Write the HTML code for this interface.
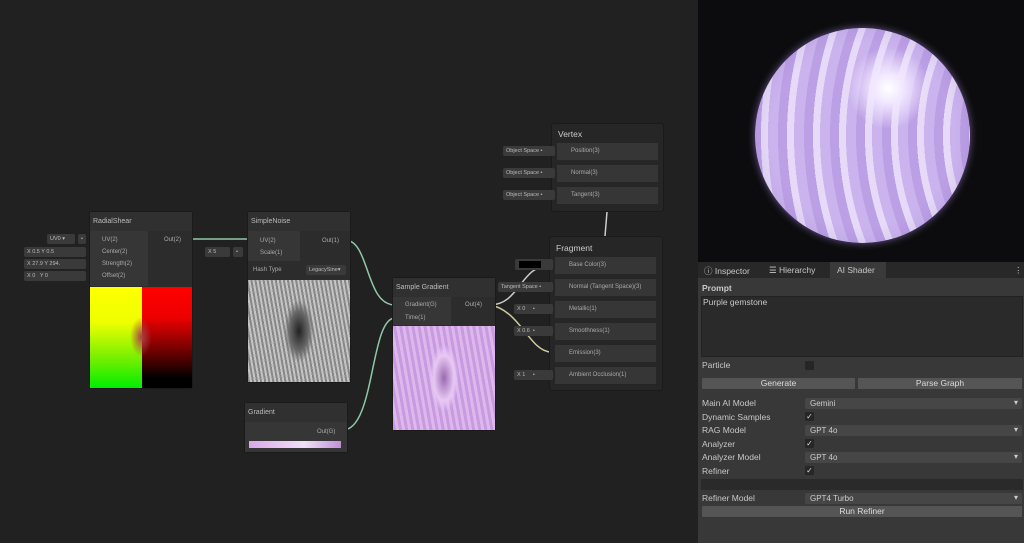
<!DOCTYPE html>
<html><head><style>
*{margin:0;padding:0;box-sizing:border-box}
body{width:1024px;height:543px;background:#212121;position:relative;overflow:hidden;font-family:"Liberation Sans",sans-serif;color:#c4c4c4}
.a{position:absolute}
.node{position:absolute;background:#2c2c2c;border:1px solid #1a1a1a;border-radius:3px}
.hd{position:absolute;left:0;right:0;top:0;height:19px;background:#303030;font-size:7px;color:#bbb;padding:6px 0 0 3px}
.t{font-size:6px;color:#aaa;position:absolute;white-space:nowrap}
.in{position:absolute;background:#3a3a3a;border-radius:2px;font-size:5.5px;color:#bbb;padding:2px 3px;white-space:nowrap}
.slot{position:absolute;background:#363636;height:17px;font-size:6px;color:#aaa;padding:5px 0 0 14px}
.pl{position:absolute;font-size:8.5px;color:#c8c8c8;white-space:nowrap}
.dd{position:absolute;background:#464646;height:11px;border-radius:2px;font-size:8px;color:#ccc;padding:1px 5px}
.dd:after{content:"▾";position:absolute;right:4px;top:0;font-size:8px}
.cb{position:absolute;width:9px;height:9px;background:#262626;border-radius:1px;font-size:8px;color:#ddd;line-height:9px;text-align:center}
.btn{position:absolute;background:#555;height:11px;font-size:8.5px;color:#ddd;text-align:center;line-height:11px;border-radius:1px}
</style></head><body>
<svg class="a" style="left:0;top:0" width="700" height="543">
<g fill="none" stroke-width="1.5">
<path d="M190 239 L250 239" stroke="#8fc9a8"/>
<path d="M345 240 C370 240,365 305,395 305" stroke="#8fc9a8"/>
<path d="M343 430 C375 430,370 318,395 318" stroke="#8fc9a8"/>
<path d="M490 305 C520 305,520 265,551 265" stroke="#ccc"/>
<path d="M490 305 C520 310,530 352,551 352" stroke="#cfc9a0"/>
<path d="M607 212 L605 236" stroke="#ccc"/>
</g>
<g fill="#8fc9a8"><circle cx="188" cy="239" r="2"/><circle cx="253" cy="239" r="2"/><circle cx="343" cy="240" r="2"/><circle cx="398" cy="304" r="2"/><circle cx="398" cy="317" r="2"/><circle cx="341" cy="430" r="2"/><circle cx="489" cy="304" r="2" fill="#ddd"/></g>
</svg>
<!-- RadialShear -->
<div class="node" style="left:89px;top:211px;width:104px;height:178px">
<div class="hd">RadialShear</div>
<div class="a" style="left:0;top:19px;width:58px;height:55px;background:#363636"></div>
<div class="t" style="left:12px;top:25px">UV(2)</div><div class="t" style="left:12px;top:37px">Center(2)</div>
<div class="t" style="left:12px;top:49px">Strength(2)</div><div class="t" style="left:12px;top:61px">Offset(2)</div>
<div class="t" style="left:74px;top:25px">Out(2)</div>
<div class="a" style="left:0;top:75px;width:52px;height:101px;background:linear-gradient(180deg,#ff0 0,#ef0 35%,#6e0 75%,#0e0)"></div>
<div class="a" style="left:52px;top:75px;width:50px;height:101px;background:linear-gradient(180deg,#f00 0,#e00 30%,#500 70%,#000 90%)"></div>
<div class="a" style="left:40px;top:105px;width:22px;height:40px;border-radius:50%;background:radial-gradient(#a44,rgba(150,60,30,0) 70%)"></div>
</div>
<div class="in" style="left:47px;top:234px;width:28px">UV0 ▾</div>
<div class="in" style="left:78px;top:234px;width:8px">•</div>
<div class="in" style="left:24px;top:247px;width:62px">X 0.5 Y 0.5</div>
<div class="in" style="left:24px;top:259px;width:62px">X 27.9 Y 294.</div>
<div class="in" style="left:24px;top:271px;width:62px">X 0 &nbsp;&nbsp;Y 0</div>
<!-- SimpleNoise -->
<div class="node" style="left:247px;top:211px;width:104px;height:172px">
<div class="hd">SimpleNoise</div>
<div class="a" style="left:0;top:19px;width:52px;height:30px;background:#363636"></div>
<div class="t" style="left:12px;top:26px">UV(2)</div><div class="t" style="left:12px;top:38px">Scale(1)</div>
<div class="t" style="left:74px;top:26px">Out(1)</div>
<div class="t" style="left:5px;top:55px">Hash Type</div>
<div class="in" style="left:58px;top:53px;width:40px">LegacySine▾</div>
<div class="a" style="left:0;top:68px;width:102px;height:102px;background:radial-gradient(ellipse 18% 38% at 50% 50%,#222,#666 50%,transparent 80%),repeating-linear-gradient(80deg,#888 0 2px,#c4c4c4 2px 4px)"></div>
</div>
<div class="in" style="left:205px;top:247px;width:25px">X 5</div>
<div class="in" style="left:233px;top:247px;width:10px">•</div>
<!-- Gradient -->
<div class="node" style="left:244px;top:402px;width:104px;height:51px">
<div class="hd">Gradient</div>
<div class="a" style="left:0;top:19px;width:102px;height:30px;background:#363636"></div>
<div class="t" style="left:72px;top:26px">Out(G)</div>
<div class="a" style="left:4px;top:38px;width:92px;height:7px;background:linear-gradient(90deg,#d8a8e8,#f0e0f8 60%,#c090d8)"></div>
</div>
<!-- Sample Gradient -->
<div class="node" style="left:392px;top:277px;width:104px;height:154px">
<div class="hd">Sample Gradient</div>
<div class="a" style="left:0;top:19px;width:58px;height:28px;background:#363636"></div>
<div class="t" style="left:12px;top:24px">Gradient(G)</div><div class="t" style="left:12px;top:37px">Time(1)</div>
<div class="t" style="left:72px;top:24px">Out(4)</div>
<div class="a" style="left:0;top:48px;width:102px;height:104px;background:radial-gradient(ellipse 18% 40% at 50% 50%,#9a6ab0,#e8c8f4 55%,transparent 80%),repeating-linear-gradient(80deg,#c89ae0 0 3px,#dcb8ec 3px 6px)"></div>
</div>
<!-- Vertex -->
<div class="node" style="left:551px;top:123px;width:113px;height:89px;background:#262626">
<div class="t" style="left:6px;top:5px;font-size:8.5px;color:#ccc">Vertex</div>
<div class="slot" style="left:5px;top:19px;width:101px">Position(3)</div>
<div class="slot" style="left:5px;top:41px;width:101px">Normal(3)</div>
<div class="slot" style="left:5px;top:63px;width:101px">Tangent(3)</div>
</div>
<div class="in" style="left:503px;top:146px;width:52px">Object Space •</div>
<div class="in" style="left:503px;top:168px;width:52px">Object Space •</div>
<div class="in" style="left:503px;top:190px;width:52px">Object Space •</div>
<!-- Fragment -->
<div class="node" style="left:549px;top:236px;width:114px;height:155px;background:#262626">
<div class="t" style="left:6px;top:6px;font-size:8.5px;color:#ccc">Fragment</div>
<div class="slot" style="left:5px;top:20px;width:101px">Base Color(3)</div>
<div class="slot" style="left:5px;top:42px;width:101px">Normal (Tangent Space)(3)</div>
<div class="slot" style="left:5px;top:64px;width:101px">Metallic(1)</div>
<div class="slot" style="left:5px;top:86px;width:101px">Smoothness(1)</div>
<div class="slot" style="left:5px;top:108px;width:101px">Emission(3)</div>
<div class="slot" style="left:5px;top:130px;width:101px">Ambient Occlusion(1)</div>
</div>
<div class="in" style="left:515px;top:259px;width:38px;height:11px"><div class="a" style="left:4px;top:2px;width:22px;height:7px;background:#000"></div></div>
<div class="in" style="left:498px;top:282px;width:55px">Tangent Space •</div>
<div class="in" style="left:514px;top:304px;width:39px">X 0 &nbsp;&nbsp;&nbsp;&nbsp;•</div>
<div class="in" style="left:514px;top:326px;width:39px">X 0.6 &nbsp;•</div>
<div class="in" style="left:514px;top:370px;width:39px">X 1 &nbsp;&nbsp;&nbsp;&nbsp;•</div>
<!-- right panel -->
<div class="a" style="left:698px;top:0;width:326px;height:262px;background:#0c0c0e"></div>
<div class="a" style="left:755px;top:28px;width:215px;height:215px;border-radius:50%;background:radial-gradient(circle at 62% 28%,#fff 0,#f2e8ff 7%,transparent 20%),radial-gradient(circle at 50% 50%,transparent 60%,rgba(120,90,170,.35) 100%),repeating-radial-gradient(ellipse 100% 100% at 180% 50%,#cbb4ee 0 10px,#e6daf8 10px 17px,#bca0e6 17px 26px);box-shadow:0 0 8px #6a5a90"></div>
<div class="a" style="left:698px;top:262px;width:326px;height:281px;background:#383838"></div>
<div class="a" style="left:698px;top:262px;width:326px;height:16px;background:#282828"></div>
<div class="a" style="left:830px;top:262px;width:56px;height:16px;background:#3a3a3a"></div>
<div class="pl" style="left:704px;top:265px">ⓘ Inspector</div>
<div class="pl" style="left:769px;top:265px">☰ Hierarchy</div>
<div class="pl" style="left:837px;top:265px">AI Shader</div>
<div class="pl" style="left:1014px;top:265px">⋮</div>
<div class="pl" style="left:702px;top:283px;font-weight:bold">Prompt</div>
<div class="a" style="left:701px;top:296px;width:322px;height:61px;background:#2a2a2a;border:1px solid #222"></div>
<div class="pl" style="left:703px;top:297px">Purple gemstone</div>
<div class="pl" style="left:702px;top:360px">Particle</div>
<div class="cb" style="left:805px;top:361px"></div>
<div class="btn" style="left:702px;top:378px;width:153px">Generate</div>
<div class="btn" style="left:858px;top:378px;width:164px">Parse Graph</div>
<div class="pl" style="left:702px;top:398px">Main AI Model</div><div class="dd" style="left:805px;top:398px;width:217px">Gemini</div>
<div class="pl" style="left:702px;top:412px">Dynamic Samples</div><div class="cb" style="left:805px;top:412px">✓</div>
<div class="pl" style="left:702px;top:425px">RAG Model</div><div class="dd" style="left:805px;top:425px;width:217px">GPT 4o</div>
<div class="pl" style="left:702px;top:439px">Analyzer</div><div class="cb" style="left:805px;top:439px">✓</div>
<div class="pl" style="left:702px;top:452px">Analyzer Model</div><div class="dd" style="left:805px;top:452px;width:217px">GPT 4o</div>
<div class="pl" style="left:702px;top:466px">Refiner</div><div class="cb" style="left:805px;top:466px">✓</div>
<div class="a" style="left:701px;top:479px;width:322px;height:11px;background:#2a2a2a"></div>
<div class="pl" style="left:702px;top:493px">Refiner Model</div><div class="dd" style="left:805px;top:493px;width:217px">GPT4 Turbo</div>
<div class="btn" style="left:702px;top:506px;width:320px">Run Refiner</div>
</body></html>
